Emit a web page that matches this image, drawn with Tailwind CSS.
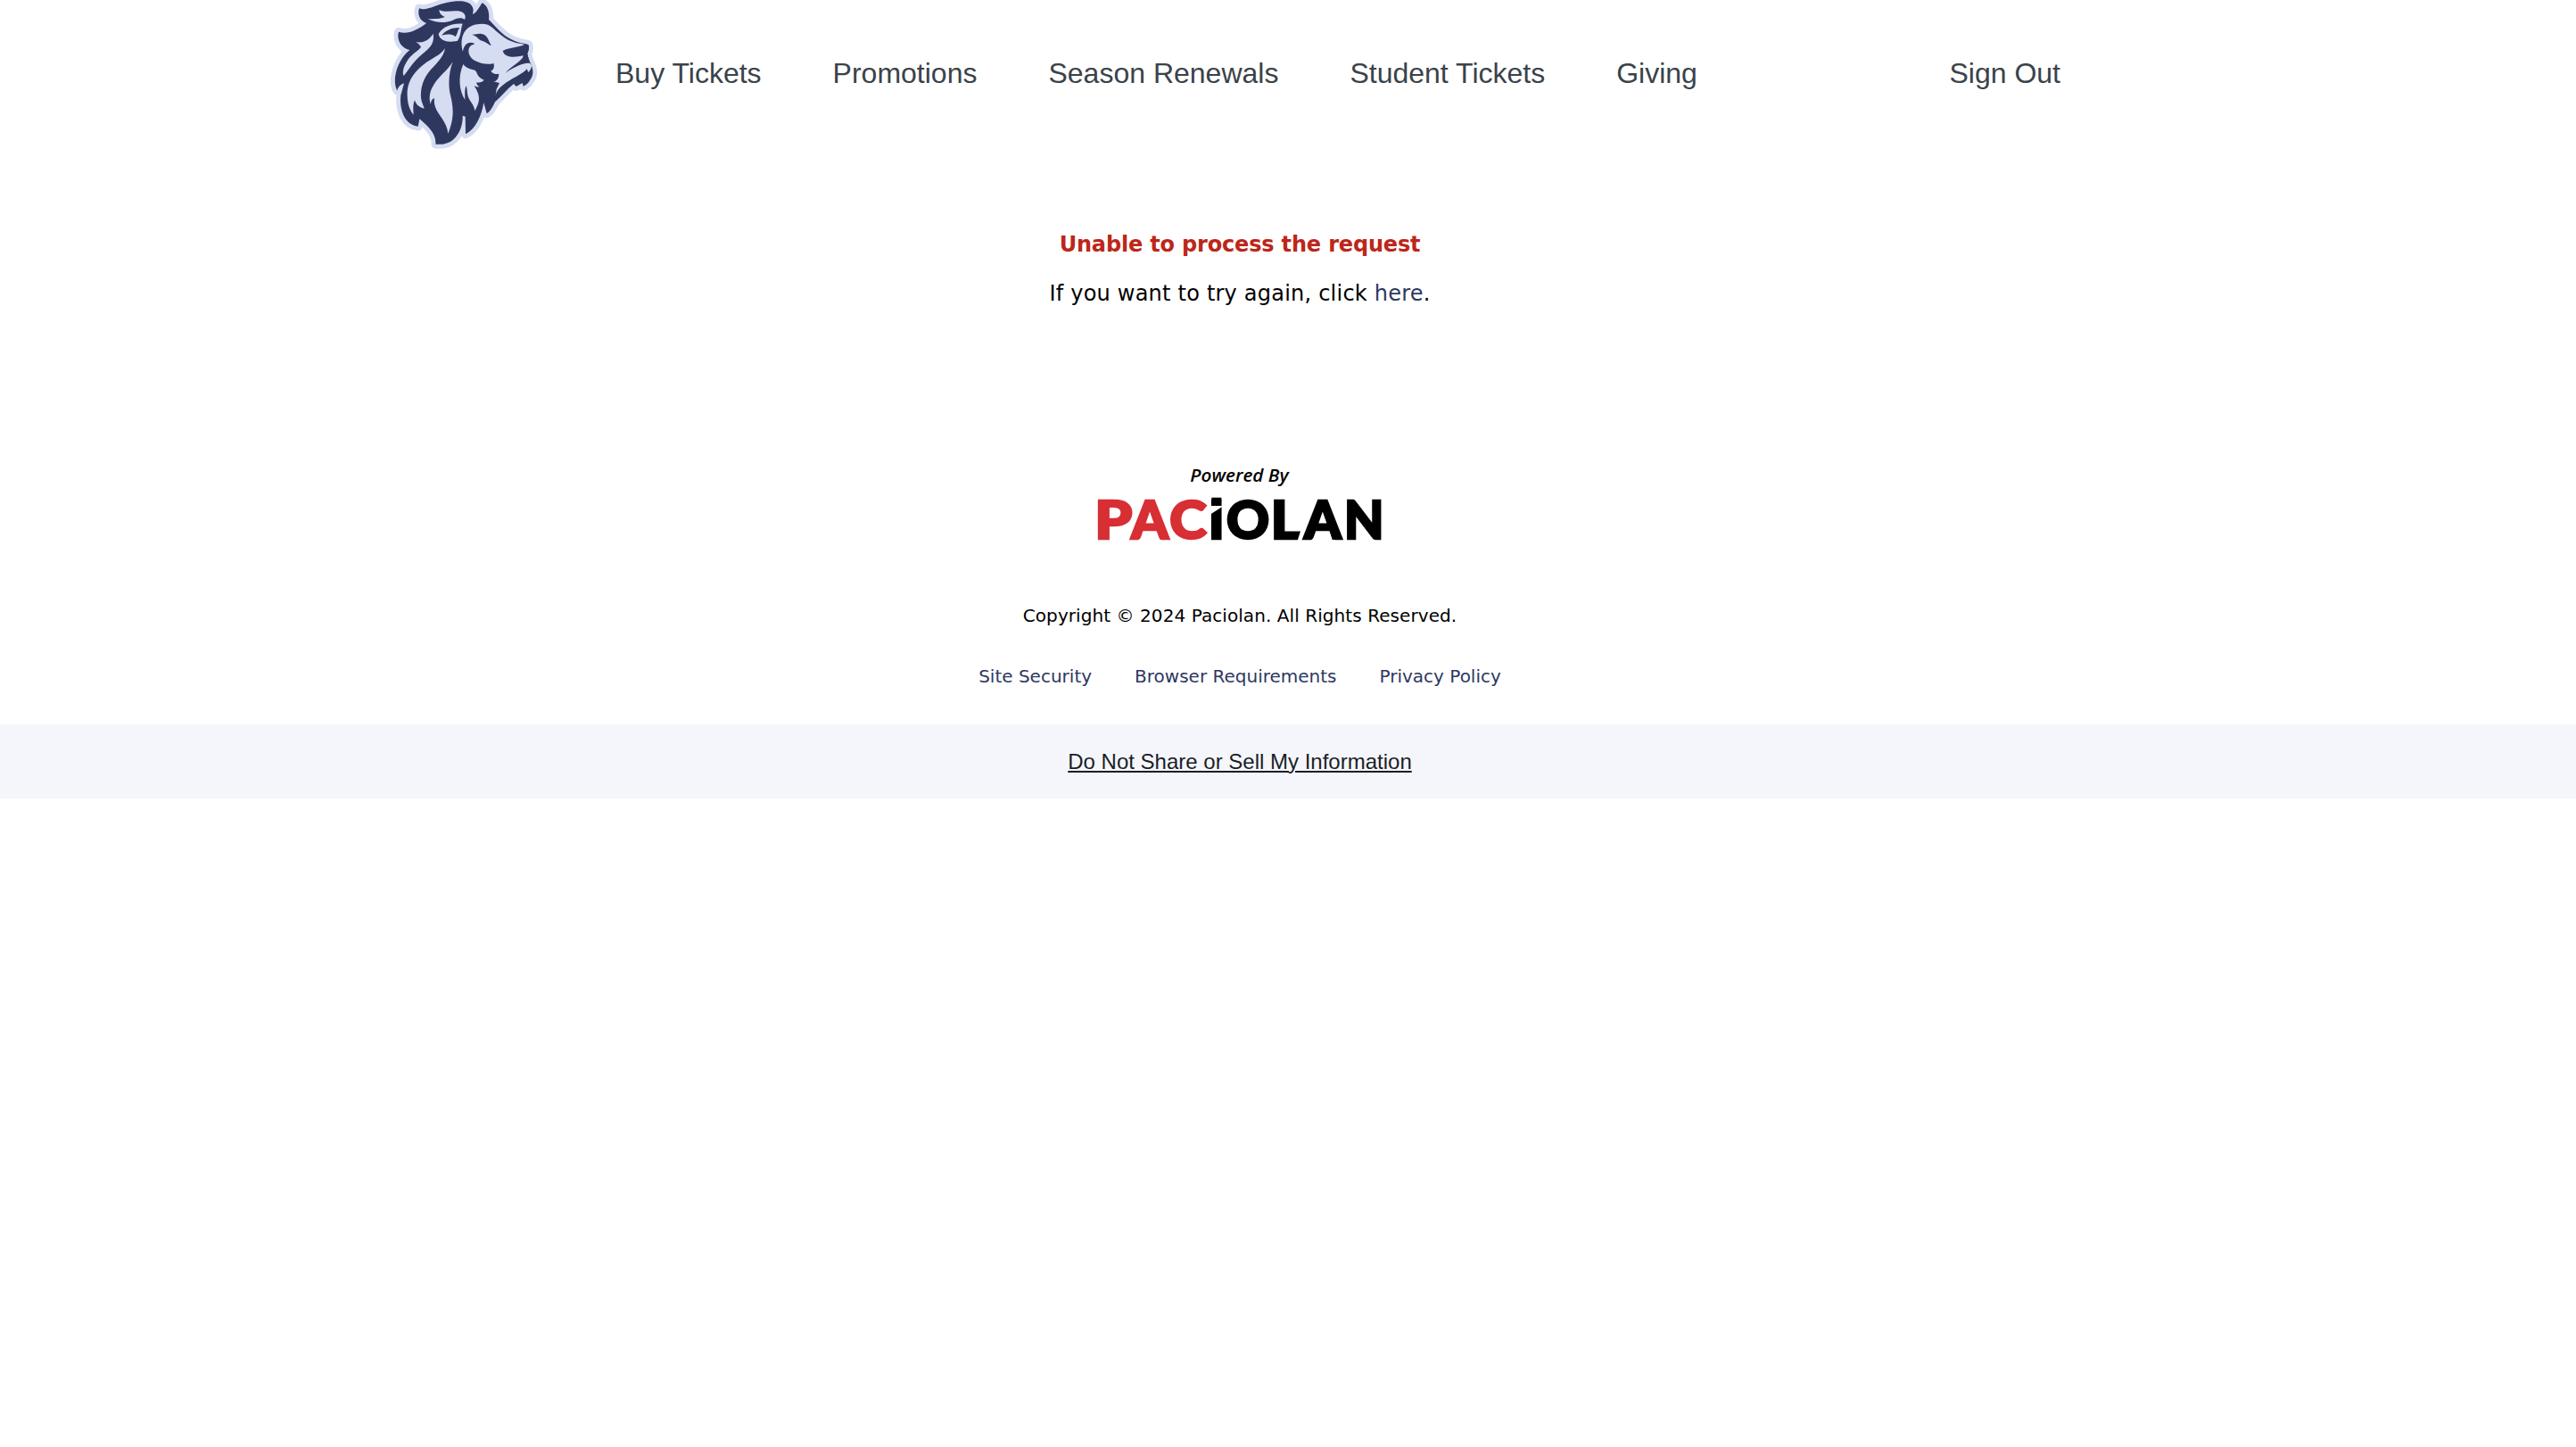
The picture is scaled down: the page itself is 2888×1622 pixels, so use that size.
<!DOCTYPE html>
<html lang="en">
<head>
<meta charset="utf-8">
<title>Tickets</title>
<script src="https://cdn.jsdelivr.net/npm/@tailwindcss/browser@4"></script>
</head>
<body class="bg-white text-black">
<header class="flex h-[180px] items-start pl-[430px]">
  <svg class="h-[180px] w-[180px] shrink-0" viewBox="0 0 540 540" aria-label="Lion">
    <defs>
      <path id="head" d="M120 28C145 38 175 15 215 8C260 0 296 2 302 32L300 48C315 42 322 22 332 10C350 18 357 42 354 66C380 92 400 118 425 130C445 142 465 145 487 150C491 162 488 172 484 180C486 195 490 203 494 213C505 232 505 256 492 270C487 280 480 286 470 290L467 279L446 291L438 282C415 300 395 325 375 343C367 362 358 375 347 382L337 345C330 388 310 435 276 451L275 392L266 389C268 430 245 492 175 485C178 450 150 425 121 400L116 425C75 422 52 375 58 320L69 280C55 285 48 295 46 305C28 275 42 205 88 168C60 163 43 135 51 107C80 118 115 100 144 78C120 68 114 48 120 28Z"/>
    </defs>
    <use href="#head" fill="#d6dcf1" stroke="#d6dcf1" stroke-width="29" stroke-linejoin="round"/>
    <use href="#head" fill="#2e385f"/>
    <g fill="#d6dcf1">
      <path d="M187 33C210 44 235 34 258 38C274 42 278 54 273 66C262 57 246 61 229 70C206 79 172 76 149 64C172 63 192 64 206 57C194 52 187 44 187 33Z"/>
      <path d="M185 115C195 90 235 77 266 80C259 96 262 118 249 137C222 144 190 141 185 115Z"/>
      <path d="M167 113C172 145 158 160 130 182C101 205 87 231 68 255C60 240 72 212 89 192C104 176 119 169 126 158C120 148 114 144 108 141C135 147 155 132 167 113Z"/>
      <path d="M207 162C202 195 172 218 151 244C127 275 122 315 128 340L137 365C119 361 109 351 105 337C98 350 100 370 101 386C81 362 79 330 80 305C84 265 109 238 136 216C162 195 190 188 207 162Z"/>
      <path d="M233 207C220 241 217 283 224 316C232 350 242 389 217 449C213 409 184 388 174 360C170 350 170 340 171 330C161 334 160 342 158 350C151 328 156 304 169 285C188 254 216 237 233 207Z"/>
      <path d="M268 216C278 230 292 232 307 236C317 242 312 258 338 269C330 279 320 276 312 278C315 286 318 289 323 291C315 294 310 291 305 289C327 323 325 342 307 373C304 350 291 344 284 324C280 310 282 298 278 289C272 300 274 317 274 335C255 307 249 260 268 216Z"/>
      <path d="M267 174C256 138 264 89 315 82C333 78 350 80 362 90C382 106 405 130 430 139C447 146 463 147 470 149L486 153L482 185L492 213L498 220C498 229 493 238 487 243L482 232C468 250 430 263 400 287C387 297 380 308 377 320L380 299L390 279L369 274C379 274 387 266 388 248C379 251 367 248 361 239C370 235 374 225 370 213C354 218 330 216 309 205C286 194 280 167 292 155C296 150 302 151 307 147C285 135 268 153 267 174Z"/>
    </g>
    <g fill="#2e385f">
      <path d="M196 119C208 102 234 92 256 93C249 101 250 112 242 123C230 114 214 114 196 119Z"/>
      <path d="M297 116C307 118 316 112 329 114C350 116 352 137 363 154C351 149 343 140 331 137C319 135 319 123 297 116Z"/>
      <path d="M401 171C419 161 459 158 474 150L487 150C490 162 487 173 483 180C486 193 490 205 494 213C469 209 439 227 410 245C426 226 452 213 468 194L470 187C445 193 407 196 401 171Z"/>
    </g>
  </svg>
  <nav class="ml-20 mt-[63px] flex gap-20 font-['Liberation_Sans',sans-serif] text-[32px] leading-[38px] whitespace-nowrap text-[#3a434a]">
    <a>Buy Tickets</a><a>Promotions</a><a>Season Renewals</a><a>Student Tickets</a><a>Giving</a>
  </nav>
  <a class="mt-[63px] mr-[578px] ml-auto font-['Liberation_Sans',sans-serif] text-[32px] leading-[38px] whitespace-nowrap text-[#3a434a]">Sign Out</a>
</header>
<main class="flex w-[2780px] flex-col items-center pt-[79px] font-['DejaVu_Sans',sans-serif] text-[24px] leading-[30px]">
  <p class="font-bold tracking-[-0.17px] text-[#bd261a]">Unable to process the request</p>
  <p class="mt-[25px] tracking-[0.22px]">If you want to try again, click <a class="text-[#2e385f]">here</a>.</p>
</main>
<footer>
  <div class="flex w-[2780px] flex-col items-center pt-[166px] font-['DejaVu_Sans',sans-serif] text-[20px] leading-[24px]">
    <svg class="h-[110px] w-[380px]" viewBox="0 0 1140 330">
      <text x="403" y="90" textLength="331" lengthAdjust="spacingAndGlyphs" font-family="Open Sans, sans-serif" font-style="italic" font-weight="600" font-size="57">Powered By</text>
      <g font-family="Lato, sans-serif" font-weight="900" font-size="178" stroke-width="8">
        <g fill="#d72f34" stroke="#d72f34">
          <text transform="translate(82 281) scale(1.13 1)">P</text>
          <text transform="translate(204.5 281)">A</text>
          <text transform="translate(334 281) scale(1.06 1)">C</text>
          <path stroke="none" d="M296 250L312 259L298 270L302 285H325L315 250Z"/>
        </g>
        <g fill="#000" stroke="#000">
          <text transform="translate(464 281)">I</text>
          <text transform="translate(525 281)">O</text>
          <text transform="translate(674 281) scale(1.06 1)">L</text>
          <text transform="translate(786 281)">A</text>
          <text transform="translate(921 281) scale(.97 1)">N</text>
          <path stroke="none" d="M475 143H508V155H475ZM875 250L891 259L877 270L881 285H904L894 250Z"/>
        </g>
      </g>
      <path fill="#fff" d="M470 171H512V173L470 200ZM776 250V288H764Z"/>
    </svg>
    <p class="mt-[58px] tracking-[0.07px]">Copyright © 2024 Paciolan. All Rights Reserved.</p>
    <div class="mt-[44px] flex gap-12 text-[#2e385f]"><a>Site Security</a><a>Browser Requirements</a><a>Privacy Policy</a></div>
  </div>
  <div class="mt-[42px] flex h-[83px] items-center justify-center bg-[#f5f6fb] pr-[108px] font-['Liberation_Sans',sans-serif] text-[24px] leading-[28px] text-[#1a1f26]"><a class="underline decoration-2 underline-offset-2">Do Not Share or Sell My Information</a></div>
</footer>
</body>
</html>
